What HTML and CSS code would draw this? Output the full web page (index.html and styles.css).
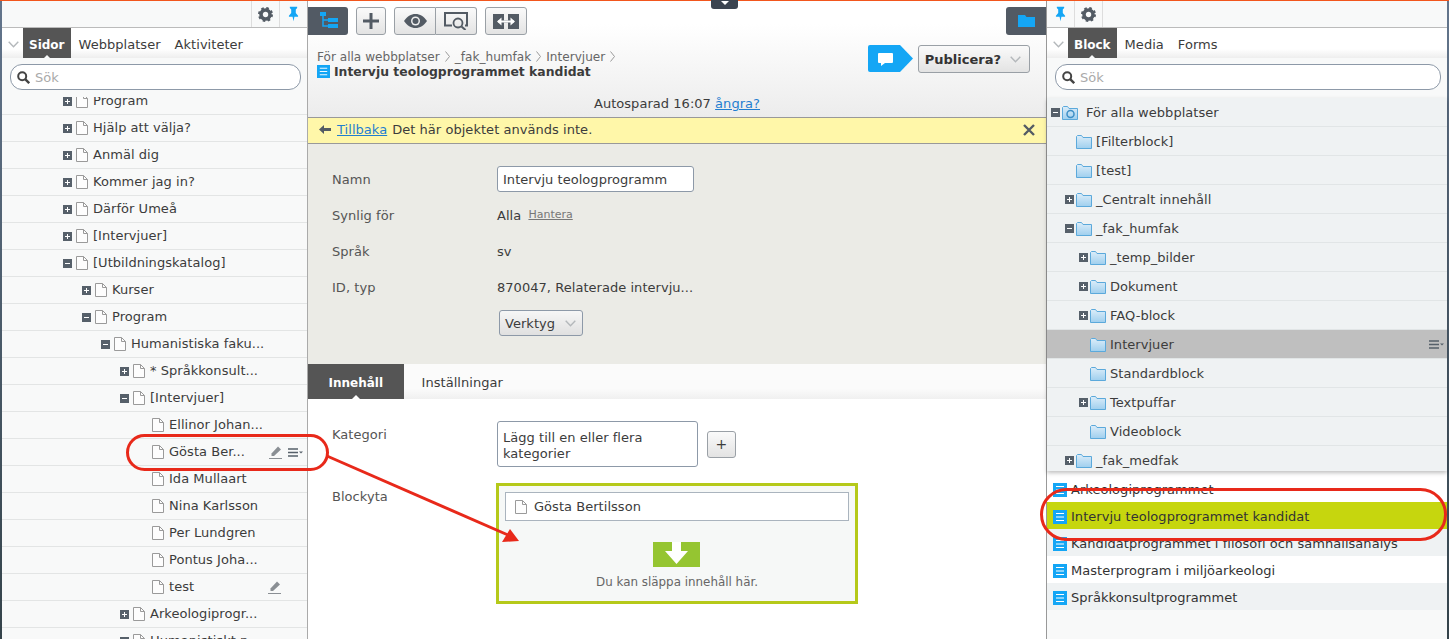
FILE: index.html
```html
<!DOCTYPE html>
<html>

<head>
  <meta charset="UTF-8">
  <title>Intervju teologprogrammet kandidat</title>
  <link rel="stylesheet" href="styles.css">
</head>

<body>
  <svg class="defs" width="0" height="0">
    <defs>
      <linearGradient id="folderFill" x1="0" y1="0" x2="0" y2="1">
        <stop offset="0" stop-color="#dcedf9" />
        <stop offset="1" stop-color="#9fcfee" />
      </linearGradient>
    </defs>
    <symbol id="i-page" viewBox="0 0 12 14">
      <path d="M.5.5h7l4 4v9H.5z" fill="#fdfdfd" stroke="#9a9a9a" />
      <path d="M7.5.5v4h4" fill="none" stroke="#9a9a9a" />
    </symbol>
    <symbol id="i-plus" viewBox="0 0 9 9">
      <rect width="9" height="9" fill="#56606a" />
      <path d="M2 4.500h5M4.500 2v5" stroke="#fff" />
    </symbol>
    <symbol id="i-minus" viewBox="0 0 9 9">
      <rect width="9" height="9" fill="#56606a" />
      <path d="M2 4.500h5" stroke="#fff" />
    </symbol>
    <symbol id="i-folder" viewBox="0 0 16 14">
      <path d="M.5 13.500V1.500L1.500.5h4l1.500 2h8.500v11z" fill="url(#folderFill)" stroke="#5ba9db" />
    </symbol>
    <symbol id="i-list" viewBox="0 0 14 14">
      <rect width="14" height="14" fill="#14a6f5" />
      <path d="M3 3.500h8M3 7h8M3 10.500h8" stroke="#fff" />
    </symbol>
    <symbol id="i-gear" viewBox="0 0 16 16">
      <circle cx="8" cy="8" r="4.800" fill="none" stroke="#535b64" stroke-width="3.800" />
      <circle cx="8" cy="8" r="6.800" fill="none" stroke="#535b64" stroke-width="2.400" stroke-dasharray="2.700 2.640" />
    </symbol>
    <symbol id="i-pin" viewBox="0 0 12 16">
      <path d="M2 0h8v1.500L8.500 3v4l2.500 3v1H7l-1 5-1-5H1v-1l2.500-3V3L2 1.500z" fill="#14a6f5" />
    </symbol>
    <symbol id="i-search" viewBox="0 0 13 13">
      <circle cx="5.200" cy="5.200" r="4" fill="none" stroke="#444" stroke-width="2" />
      <path d="M8.200 8.200l4 4" stroke="#444" stroke-width="2.400" />
    </symbol>
    <symbol id="i-chevron" viewBox="0 0 11 7">
      <path d="M.7.700l4.800 5 4.800-5" fill="none" stroke="#b4b8bb" stroke-width="1.400" />
    </symbol>
    <symbol id="i-pencil" viewBox="0 0 13 13">
      <path d="M9 .5l3 3-7 6.500H2.500V7.500z" fill="#8a8f94" />
      <path d="M0 12.500h13" stroke="#8a8f94" />
    </symbol>
    <symbol id="i-menu" viewBox="0 0 15 9">
      <path d="M0 1h10M0 4.500h10M0 8h10" stroke="#56606a" stroke-width="1.500" />
      <path d="M11 3.500h4L13 5.500z" fill="#56606a" />
    </symbol>
    <symbol id="i-crumb" viewBox="0 0 5 11">
      <path d="M.5.500l4 5-4 5" fill="none" stroke="#999" />
    </symbol>
  </svg>

  <div class="page">

    <aside class="pane pane-left">
      <div class="pane-top">
        <span class="cell"><svg class="ic-gear"><use href="#i-gear" /></svg></span>
        <span class="cell"><svg class="ic-pin"><use href="#i-pin" /></svg></span>
      </div>
      <div class="tabs">
        <svg class="ic-chevron"><use href="#i-chevron" /></svg>
        <span class="tab active">Sidor</span>
        <span class="tab">Webbplatser</span>
        <span class="tab">Aktiviteter</span>
      </div>
      <div class="search"><svg class="ic-search"><use href="#i-search" /></svg>Sök</div>

      <div class="tree-clip">
        <div class="tree tree-pages">
          <div class="node l0"><svg class="tog"><use href="#i-plus" /></svg><svg class="ic-page"><use href="#i-page" /></svg><span>Program</span></div>
          <div class="node l0"><svg class="tog"><use href="#i-plus" /></svg><svg class="ic-page"><use href="#i-page" /></svg><span>Hjälp att välja?</span></div>
          <div class="node l0"><svg class="tog"><use href="#i-plus" /></svg><svg class="ic-page"><use href="#i-page" /></svg><span>Anmäl dig</span></div>
          <div class="node l0"><svg class="tog"><use href="#i-plus" /></svg><svg class="ic-page"><use href="#i-page" /></svg><span>Kommer jag in?</span></div>
          <div class="node l0"><svg class="tog"><use href="#i-plus" /></svg><svg class="ic-page"><use href="#i-page" /></svg><span>Därför Umeå</span></div>
          <div class="node l0"><svg class="tog"><use href="#i-plus" /></svg><svg class="ic-page"><use href="#i-page" /></svg><span>[Intervjuer]</span></div>
          <div class="node l0"><svg class="tog"><use href="#i-minus" /></svg><svg class="ic-page"><use href="#i-page" /></svg><span>[Utbildningskatalog]</span></div>
          <div class="node l1"><svg class="tog"><use href="#i-plus" /></svg><svg class="ic-page"><use href="#i-page" /></svg><span>Kurser</span></div>
          <div class="node l1"><svg class="tog"><use href="#i-minus" /></svg><svg class="ic-page"><use href="#i-page" /></svg><span>Program</span></div>
          <div class="node l2"><svg class="tog"><use href="#i-minus" /></svg><svg class="ic-page"><use href="#i-page" /></svg><span>Humanistiska faku...</span></div>
          <div class="node l3"><svg class="tog"><use href="#i-plus" /></svg><svg class="ic-page"><use href="#i-page" /></svg><span>* Språkkonsult...</span></div>
          <div class="node l3"><svg class="tog"><use href="#i-minus" /></svg><svg class="ic-page"><use href="#i-page" /></svg><span>[Intervjuer]</span></div>
          <div class="node l4"><svg class="ic-page"><use href="#i-page" /></svg><span>Ellinor Johan...</span></div>
          <div class="node l4"><svg class="ic-page"><use href="#i-page" /></svg><span>Gösta Ber...</span>
            <svg class="ic-pencil"><use href="#i-pencil" /></svg><svg class="ic-menu"><use href="#i-menu" /></svg>
          </div>
          <div class="node l4"><svg class="ic-page"><use href="#i-page" /></svg><span>Ida Mullaart</span></div>
          <div class="node l4"><svg class="ic-page"><use href="#i-page" /></svg><span>Nina Karlsson</span></div>
          <div class="node l4"><svg class="ic-page"><use href="#i-page" /></svg><span>Per Lundgren</span></div>
          <div class="node l4"><svg class="ic-page"><use href="#i-page" /></svg><span>Pontus Joha...</span></div>
          <div class="node l4"><svg class="ic-page"><use href="#i-page" /></svg><span>test</span>
            <svg class="ic-pencil"><use href="#i-pencil" /></svg>
          </div>
          <div class="node l3"><svg class="tog"><use href="#i-plus" /></svg><svg class="ic-page"><use href="#i-page" /></svg><span>Arkeologiprogr...</span></div>
          <div class="node l3"><svg class="tog"><use href="#i-plus" /></svg><svg class="ic-page"><use href="#i-page" /></svg><span>Humanistiskt p...</span></div>
        </div>
      </div>
    </aside>

    <main class="editor">
      <header class="editor-head">
        <div class="toolbar">
          <span class="dark-btn dark-left">
            <svg width="19" height="18" viewBox="0 0 19 18">
              <path d="M1 0h6v4H1zM9 6h10v4H9zM9 12h10v4H9z" fill="#14a6f5" />
              <path d="M4 4v10h5M4 8h5" fill="none" stroke="#14a6f5" stroke-width="1.500" />
            </svg>
          </span>
          <span class="btn btn-plus">
            <svg width="16" height="16" viewBox="0 0 16 16"><path d="M8 0v16M0 8h16" stroke="#535b64" stroke-width="3" /></svg>
          </span>
          <span class="btn-group">
            <span class="btn btn-eye">
              <svg width="23" height="14" viewBox="0 0 23 14">
                <path d="M0 7c3-4.500 7-7 11.500-7S20 2.500 23 7c-3 4.500-7 7-11.500 7S3 11.500 0 7z" fill="#535b64" />
                <circle cx="11.500" cy="7" r="4.500" fill="#eee" />
                <circle cx="11.500" cy="7" r="3" fill="#535b64" />
              </svg>
            </span>
            <span class="btn btn-preview">
              <svg width="24" height="18" viewBox="0 0 24 18">
                <path d="M8 13.500H1V1h22v12.500h-2" fill="none" stroke="#535b64" stroke-width="2" />
                <circle cx="14" cy="11" r="4.500" fill="none" stroke="#535b64" stroke-width="1.800" />
                <path d="M17.500 14.500l4 3.500" stroke="#535b64" stroke-width="2" />
              </svg>
            </span>
          </span>
          <span class="btn btn-split">
            <svg width="26" height="15" viewBox="0 0 26 15">
              <path d="M0 0h11v15H0zM15 0h11v15H15z" fill="#535b64" />
              <path d="M6 7.500h14" stroke="#535b64" stroke-width="2" />
              <path d="M5 7.500h16" stroke="#fff" stroke-width="2" />
              <path d="M4 7.500l4.500-4v8zM22 7.500l-4.500-4v8z" fill="#fff" />
            </svg>
          </span>
          <span class="dark-btn dark-right">
            <svg width="17" height="12" viewBox="0 0 17 12"><path d="M0 12V0h7l1.500 2H17v10z" fill="#14a6f5" /></svg>
          </span>
        </div>

        <div class="head-row">
          <div class="head-titles">
            <div class="crumbs">
              <span>För alla webbplatser</span><svg class="ic-crumb"><use href="#i-crumb" /></svg>
              <span>_fak_humfak</span><svg class="ic-crumb"><use href="#i-crumb" /></svg>
              <span>Intervjuer</span><svg class="ic-crumb"><use href="#i-crumb" /></svg>
            </div>
            <h1 class="title"><svg class="ic-list"><use href="#i-list" /></svg>Intervju teologprogrammet kandidat</h1>
          </div>
          <div class="publish">
            <svg width="46" height="27" viewBox="0 0 46 27">
              <path d="M2 0h30l13 13.500L32 27H2a2 2 0 0 1-2-2V2a2 2 0 0 1 2-2z" fill="#14a6f5" />
              <path d="M11 8h13a1 1 0 0 1 1 1v8a1 1 0 0 1-1 1h-7l-4 3v-3h-2a1 1 0 0 1-1-1V9a1 1 0 0 1 1-1z" fill="#fff" />
            </svg>
            <span class="publish-btn">Publicera?<svg class="ic-chevron"><use href="#i-chevron" /></svg></span>
          </div>
        </div>

        <div class="autosave">Autosparad 16:07 <a href="#">ångra?</a></div>
      </header>

      <div class="notice">
        <svg width="12" height="9" viewBox="0 0 12 9"><path d="M0 4.500L5 0v3h7v3H5v3z" fill="#535b64" /></svg>
        <a href="#">Tillbaka</a> <span>Det här objektet används inte.</span>
        <svg class="notice-close" width="12" height="12" viewBox="0 0 12 12"><path d="M1 1l10 10M11 1L1 11" stroke="#535b64" stroke-width="2.400" /></svg>
      </div>

      <section class="props">
        <span class="prop-label">Namn</span>
        <span><span class="text-input">Intervju teologprogramm</span></span>
        <span class="prop-label">Synlig för</span>
        <span>Alla <a class="manage" href="#">Hantera</a></span>
        <span class="prop-label">Språk</span>
        <span>sv</span>
        <span class="prop-label">ID, typ</span>
        <span>870047, Relaterade intervju...</span>
        <span></span>
        <span><span class="tools-btn">Verktyg<svg class="ic-chevron"><use href="#i-chevron" /></svg></span></span>
      </section>

      <nav class="content-tabs">
        <span class="content-tab active">Innehåll</span>
        <span class="content-tab">Inställningar</span>
      </nav>

      <section class="content">
        <span class="prop-label cat-label">Kategori</span>
        <div class="cat-row">
          <span class="cat-box">Lägg till en eller flera kategorier</span>
          <span class="cat-add">+</span>
        </div>
        <span class="prop-label block-label">Blockyta</span>
        <div class="dropzone">
          <div class="drop-item"><svg class="ic-page"><use href="#i-page" /></svg>Gösta Bertilsson</div>
          <div class="drop-arrow">
            <svg width="27" height="23" viewBox="0 0 27 23"><path d="M9 0h9v9h7L13.500 22 2 9h7z" fill="#fff" /></svg>
          </div>
          <div class="drop-text">Du kan släppa innehåll här.</div>
        </div>
      </section>
    </main>

    <aside class="pane pane-right">
      <div class="pane-top">
        <span class="cell"><svg class="ic-pin"><use href="#i-pin" /></svg></span>
        <span class="cell"><svg class="ic-gear"><use href="#i-gear" /></svg></span>
      </div>
      <div class="tabs">
        <svg class="ic-chevron"><use href="#i-chevron" /></svg>
        <span class="tab active">Block</span>
        <span class="tab">Media</span>
        <span class="tab">Forms</span>
      </div>
      <div class="search"><svg class="ic-search"><use href="#i-search" /></svg>Sök</div>

      <div class="tree tree-blocks">
        <div class="node f0 root"><svg class="tog"><use href="#i-minus" /></svg>
          <svg class="ic-folder" viewBox="0 0 16 14">
            <use href="#i-folder" />
            <circle cx="8.500" cy="8" r="3.500" fill="none" stroke="#3d8fc6" stroke-width="1.500" />
          </svg><span>För alla webbplatser</span></div>
        <div class="node f1"><svg class="ic-folder"><use href="#i-folder" /></svg><span>[Filterblock]</span></div>
        <div class="node f1"><svg class="ic-folder"><use href="#i-folder" /></svg><span>[test]</span></div>
        <div class="node f0b"><svg class="tog"><use href="#i-plus" /></svg><svg class="ic-folder"><use href="#i-folder" /></svg><span>_Centralt innehåll</span></div>
        <div class="node f0b"><svg class="tog"><use href="#i-minus" /></svg><svg class="ic-folder"><use href="#i-folder" /></svg><span>_fak_humfak</span></div>
        <div class="node f1b"><svg class="tog"><use href="#i-plus" /></svg><svg class="ic-folder"><use href="#i-folder" /></svg><span>_temp_bilder</span></div>
        <div class="node f1b"><svg class="tog"><use href="#i-plus" /></svg><svg class="ic-folder"><use href="#i-folder" /></svg><span>Dokument</span></div>
        <div class="node f1b"><svg class="tog"><use href="#i-plus" /></svg><svg class="ic-folder"><use href="#i-folder" /></svg><span>FAQ-block</span></div>
        <div class="node f2 selected"><svg class="ic-folder"><use href="#i-folder" /></svg><span>Intervjuer</span><svg class="ic-menu"><use href="#i-menu" /></svg></div>
        <div class="node f2"><svg class="ic-folder"><use href="#i-folder" /></svg><span>Standardblock</span></div>
        <div class="node f1b"><svg class="tog"><use href="#i-plus" /></svg><svg class="ic-folder"><use href="#i-folder" /></svg><span>Textpuffar</span></div>
        <div class="node f2"><svg class="ic-folder"><use href="#i-folder" /></svg><span>Videoblock</span></div>
        <div class="node f0b"><svg class="tog"><use href="#i-plus" /></svg><svg class="ic-folder"><use href="#i-folder" /></svg><span>_fak_medfak</span></div>
      </div>

      <div class="items">
        <div class="item first"><svg class="ic-list"><use href="#i-list" /></svg>Arkeologiprogrammet</div>
        <div class="item hit"><svg class="ic-list"><use href="#i-list" /></svg>Intervju teologprogrammet kandidat</div>
        <div class="item alt"><svg class="ic-list"><use href="#i-list" /></svg>Kandidatprogrammet i filosofi och samhällsanalys</div>
        <div class="item"><svg class="ic-list"><use href="#i-list" /></svg>Masterprogram i miljöarkeologi</div>
        <div class="item alt"><svg class="ic-list"><use href="#i-list" /></svg>Språkkonsultprogrammet</div>
      </div>
    </aside>
  </div>

  <span class="drawer-tab">
    <svg width="8" height="4" viewBox="0 0 8 4"><path d="M0 0h8L4 4z" fill="#fff" /></svg>
  </span>

  <!-- red markup drawn on top of the screenshot -->
  <svg class="markup" width="1449" height="639" viewBox="0 0 1449 639">
    <rect x="127.500" y="435.500" width="200" height="34" rx="17" fill="none" stroke="#e8291a" stroke-width="3" />
    <rect x="1041.500" y="489.500" width="404" height="50" rx="25" fill="none" stroke="#e8291a" stroke-width="3" />
    <path d="M327 456L508 535" fill="none" stroke="#e8291a" stroke-width="3" />
    <path d="M519 541L502 542L510 529z" fill="#e8291a" />
  </svg>
</body>

</html>
```

FILE: styles.css
```css
body,
html {
  padding: 0;
  margin: 0;
}

body {
  width: 1449px;
  height: 639px;
  overflow: hidden;
  font-family: "DejaVu Sans", sans-serif;
  font-size: 13px;
  letter-spacing: .04px;
  color: #3c3c3c;
}

a {
  color: #1f7ed0;
}

.defs {
  position: absolute;
}

.page {
  display: flex;
  height: 638px;
  padding: 0 2px;
  background: linear-gradient(#63758c, #34434a);
  border-top: 1px solid #f2561d;
}

/* side panes */

.pane {
  display: flex;
  flex-direction: column;
  flex: none;
  background: #f8f9f9;
}

.pane-left {
  width: 305px;
  border-right: 1px solid #aaa;
}

.pane-right {
  width: 400px;
  border-left: 1px solid #999;
}

.pane-top {
  display: flex;
  justify-content: flex-end;
  height: 26px;
  border-bottom: 1px solid #bbb;
}

.pane-right .pane-top {
  justify-content: flex-start;
}

.cell {
  display: flex;
  justify-content: center;
  align-items: center;
  width: 28px;
  border-left: 1px solid #ddd;
  box-sizing: border-box;
}

.pane-right .cell {
  border-left: none;
  border-right: 1px solid #ddd;
}

.ic-gear {
  width: 15px;
  height: 15px;
}

.ic-pin {
  width: 11px;
  height: 16px;
}

.tabs {
  display: flex;
  align-items: center;
  height: 30px;
  padding-left: 6px;
  background: linear-gradient(#fff 70%, #eeeeee);
}

.ic-chevron {
  flex: none;
  width: 11px;
  height: 7px;
}

.tabs .ic-chevron {
  margin: 2px 4px 0 0;
}

.tab {
  display: flex;
  align-items: center;
  height: 30px;
  padding: 3px 6px 0 8px;
  box-sizing: border-box;
}

.tab.active {
  position: relative;
  padding: 3px 6px 0;
  background: #555;
  color: #fff;
  font-size: 12px;
  font-weight: bold;
  letter-spacing: 0;
}

.tab.active::after {
  content: "";
  position: absolute;
  left: 50%;
  bottom: 0;
  margin-left: -3px;
  border: 3px solid transparent;
  border-top: none;
  border-bottom-color: #f8f9f9;
}

.search {
  display: flex;
  align-items: center;
  gap: 5px;
  height: 24px;
  margin: 6px 6px 7px 8px;
  padding-left: 6px;
  background: #fff;
  border: 1px solid #8d99a8;
  border-radius: 12px;
  color: #aaa;
}

.ic-search {
  width: 13px;
  height: 13px;
}

.pane-right .search {
  margin-left: 8px;
  margin-right: 6px;
  margin-bottom: 8px;
}

/* trees */

.tree-clip {
  flex: 1;
  overflow: hidden;
}

.tree-pages {
  margin-top: -9px;
}

.node {
  display: flex;
  align-items: center;
  box-sizing: border-box;
  white-space: nowrap;
}

.tree-pages .node {
  height: 27px;
  border-bottom: 1px solid #e3e5e5;
}

.tree-pages .node span {
  margin-bottom: 2px;
}

.tog {
  flex: none;
  width: 9px;
  height: 9px;
  margin-right: 4px;
}

.ic-page {
  flex: none;
  width: 12px;
  height: 14px;
  margin-right: 5px;
}

.l0 { padding-left: 61px; }
.l1 { padding-left: 80px; }
.l2 { padding-left: 99px; }
.l3 { padding-left: 118px; }
.l4 { padding-left: 150px; }

.ic-pencil {
  flex: none;
  width: 13px;
  height: 13px;
}

.tree-pages .ic-pencil {
  margin-left: auto;
  margin-right: 26px;
}

.ic-menu {
  flex: none;
  width: 15px;
  height: 9px;
}

.tree-pages .ic-pencil + .ic-menu {
  margin-left: -20px;
  margin-right: 4px;
}

.tree-blocks {
  position: relative;
  z-index: 1;
  flex: none;
  height: 373px;
  overflow: hidden;
  background: #eff2f3;
  box-shadow: 0 2px 4px rgba(0, 0, 0, .25);
}

.tree-blocks .node {
  height: 29px;
  padding-top: 1px;
  border-bottom: 1px solid #e1e5e6;
}

.tree-blocks .tog {
  margin-right: 2px;
}

.ic-folder {
  flex: none;
  width: 16px;
  height: 14px;
  margin-right: 4px;
}

.f0 { padding-left: 4px; }
.f0 .ic-folder { margin-right: 8px; }
.f0b { padding-left: 18px; }
.f1 { padding-left: 29px; }
.f1b { padding-left: 32px; }
.f2 { padding-left: 43px; }

.node.selected {
  background: #bfbfbf;
}

.selected .ic-menu {
  margin-left: auto;
  margin-right: 3px;
}

.items {
  margin-top: -1px;
}

.item {
  display: flex;
  align-items: center;
  gap: 4px;
  box-sizing: border-box;
  height: 27px;
  padding: 2px 0 0 6px;
  background: #fff;
  color: #333;
  white-space: nowrap;
}

.item.first {
  height: 32px;
  padding-top: 7px;
}

.item.hit {
  background: #c6d60e;
}

.item.alt {
  background: #eff2f3;
}

.ic-list {
  flex: none;
  width: 14px;
  height: 14px;
}

/* middle column */

.editor {
  display: flex;
  flex-direction: column;
  flex: none;
  width: 738px;
  background: #fff;
}

.editor-head {
  height: 116px;
  background: linear-gradient(#fff 20%, #ececec);
}

.toolbar {
  display: flex;
  align-items: center;
  gap: 8px;
  height: 28px;
  padding-top: 6px;
}

.dark-btn {
  display: flex;
  justify-content: center;
  align-items: center;
  width: 40px;
  height: 28px;
  background: #525a64;
}

.dark-left {
  border-radius: 0 3px 3px 0;
}

.dark-right {
  margin-left: auto;
  border-radius: 3px 0 0 3px;
}

.btn {
  display: flex;
  justify-content: center;
  align-items: center;
  box-sizing: border-box;
  height: 28px;
  background: linear-gradient(#fafafa, #e3e3e3);
  border: 1px solid #9aa0a6;
  border-radius: 3px;
}

.btn-plus {
  width: 30px;
}

.btn-group {
  display: flex;
}

.btn-eye {
  width: 42px;
  border-radius: 3px 0 0 3px;
}

.btn-preview {
  width: 41px;
  border-left: none;
  border-radius: 0 3px 3px 0;
}

.btn-split {
  width: 42px;
}

.head-row {
  display: flex;
  justify-content: space-between;
  margin-top: 10px;
  padding: 0 16px 0 9px;
}

.head-titles {
  padding-top: 4px;
}

.crumbs {
  display: flex;
  align-items: center;
  gap: 5px;
  height: 15px;
  color: #666;
  font-size: 12.100px;
  letter-spacing: 0;
}

.ic-crumb {
  width: 5px;
  height: 11px;
}

.title {
  display: flex;
  align-items: center;
  gap: 4px;
  height: 14px;
  margin: 0;
  font-size: 12.400px;
  letter-spacing: 0;
}

.title .ic-list {
  width: 13px;
  height: 13px;
}

.publish {
  display: flex;
  gap: 4px;
}

.publish-btn {
  display: flex;
  align-items: center;
  gap: 9px;
  box-sizing: border-box;
  height: 28px;
  padding: 0 8px 0 6px;
  background: linear-gradient(#fafafa, #e3e3e3);
  border: 1px solid #9aa0a6;
  border-radius: 3px;
  color: #333;
  font-weight: bold;
  letter-spacing: 0;
}

.autosave {
  margin-top: 18px;
  text-align: center;
}

.notice {
  display: flex;
  align-items: center;
  gap: 6px;
  height: 23px;
  padding: 0 11px 2px;
  background: #fff7a9;
  border-top: 1px solid #999;
  border-bottom: 1px solid #999;
}

.notice a {
  margin-right: -1px;
}

.notice-close {
  margin-left: auto;
}

.props {
  display: grid;
  grid-template-columns: 165px 1fr;
  grid-auto-rows: 36px;
  align-items: center;
  height: 203px;
  padding: 17px 0 0 24px;
  background: #ebebe6;
}

.prop-label {
  color: #555;
}

.text-input {
  display: inline-block;
  box-sizing: border-box;
  width: 197px;
  height: 26px;
  padding: 0 5px;
  background: #fff;
  border: 1px solid #8d99a8;
  border-radius: 3px;
  line-height: 25px;
}

.manage {
  position: relative;
  top: -2px;
  margin-left: 3px;
  color: #777;
  font-size: 11px;
  letter-spacing: 0;
}

.tools-btn {
  display: inline-flex;
  align-items: center;
  gap: 10px;
  box-sizing: border-box;
  height: 26px;
  margin-left: 2px;
  padding: 0 6px 0 5px;
  background: linear-gradient(#f6f6f6, #e0e0e0);
  border: 1px solid #8d99a8;
  border-radius: 3px;
}

.content-tabs {
  display: flex;
  height: 35px;
  background: linear-gradient(#fbfbfb 70%, #f0f0f0);
}

.content-tab {
  display: flex;
  align-items: center;
  padding: 2px 18px 0;
}

.content-tab.active {
  position: relative;
  padding: 2px 20.500px 0;
  background: #555;
  color: #fff;
  font-size: 12px;
  font-weight: bold;
  letter-spacing: 0;
}

.content-tab.active::after {
  content: "";
  position: absolute;
  left: 50%;
  bottom: 0;
  margin-left: -4px;
  border: 4px solid transparent;
  border-top: none;
  border-bottom-color: #fff;
}

.content {
  display: grid;
  grid-template-columns: 165px 1fr;
  align-content: start;
  row-gap: 16px;
  padding: 22px 0 0 24px;
}

.cat-label {
  padding-top: 6px;
}

.cat-row {
  display: flex;
  align-items: center;
  gap: 9px;
}

.cat-box {
  box-sizing: border-box;
  width: 201px;
  height: 46px;
  padding: 8px 5px 0;
  background: #fff;
  border: 1px solid #8d99a8;
  border-radius: 3px;
  line-height: 16px;
}

.cat-add {
  display: flex;
  justify-content: center;
  align-items: center;
  box-sizing: border-box;
  width: 29px;
  height: 27px;
  background: linear-gradient(#fafafa, #e3e3e3);
  border: 1px solid #9aa0a6;
  border-radius: 3px;
  font-size: 14px;
}

.block-label {
  padding-top: 6px;
}

.dropzone {
  box-sizing: border-box;
  width: 362px;
  height: 121px;
  margin-left: -1px;
  padding: 6px;
  background: #f6f8f7;
  border: 3px solid #b5c91a;
}

.drop-item {
  display: flex;
  align-items: center;
  box-sizing: border-box;
  height: 29px;
  padding-left: 9px;
  background: #fff;
  border: 1px solid #aab4be;
}

.drop-item .ic-page {
  margin-right: 7px;
}

.drop-arrow {
  display: flex;
  justify-content: center;
  width: 47px;
  height: 25px;
  margin: 21px 0 0 148px;
  background: #95c531;
}

.drop-text {
  margin-top: 8px;
  color: #666;
  font-size: 11.900px;
  letter-spacing: 0;
  text-align: center;
}

/* things lying on top of the page */

.drawer-tab {
  position: absolute;
  top: 0;
  left: 711px;
  display: flex;
  justify-content: center;
  width: 27px;
  height: 9px;
  padding-top: 1px;
  box-sizing: border-box;
  background: #3b4450;
  border-radius: 0 0 3px 3px;
}

.markup {
  position: absolute;
  top: 0;
  left: 0;
  z-index: 2;
}
```
